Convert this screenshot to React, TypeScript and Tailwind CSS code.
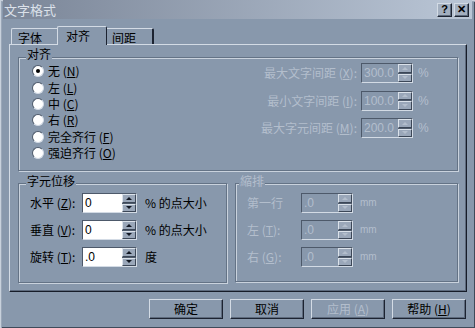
import React from 'react';

const BG = 'bg-[#8898ac]';
const RAISED =
  'border-t border-l border-t-[#d3dbe5] border-l-[#d3dbe5] border-r border-b border-r-[#1c2331] border-b-[#1c2331] shadow-[inset_-1px_-1px_0_#5d6a7d]';
const SUNKEN =
  'border-t border-l border-t-[#4d596a] border-l-[#4d596a] border-r border-b border-r-[#d3dbe5] border-b-[#d3dbe5] shadow-[inset_1px_1px_0_#1c2331]';
const DIS = 'text-[#b3becc]';

function Key({ k }: { k: string }) {
  return (
    <>
      {' '}(<span className="underline underline-offset-1">{k}</span>)
    </>
  );
}

function Radio({ checked, label, k }: { checked?: boolean; label: string; k: string }) {
  return (
    <div className="flex items-center h-[16.4px]">
      <span className="w-[12px] h-[12px] rounded-full bg-white border border-t-[#4d596a] border-l-[#4d596a] border-r-[#d3dbe5] border-b-[#d3dbe5] flex items-center justify-center">
        {checked && <span className="w-[4px] h-[4px] rounded-full bg-black" />}
      </span>
      <span className="ml-[4px]">
        {label}
        <Key k={k} />
      </span>
    </div>
  );
}

function Spin({ disabled }: { disabled?: boolean }) {
  const col = disabled ? '#b3becc' : '#111722';
  return (
    <div className="w-[14px] h-full flex flex-col">
      <div className="flex-1 bg-[#9aa7b9] border-t border-l border-t-[#dbe2ea] border-l-[#dbe2ea] border-r border-b border-r-[#3c4757] border-b-[#3c4757] flex items-center justify-center">
        <span
          className="w-0 h-0 border-x-[3px] border-b-[3px] border-x-transparent"
          style={{ borderBottomColor: col }}
        />
      </div>
      <div className="h-[1px] bg-[#4f5b6c]" />
      <div className="flex-1 bg-[#9aa7b9] border-t border-l border-t-[#dbe2ea] border-l-[#dbe2ea] border-r border-b border-r-[#3c4757] border-b-[#3c4757] flex items-center justify-center">
        <span
          className="w-0 h-0 border-x-[3px] border-t-[3px] border-x-transparent"
          style={{ borderTopColor: col }}
        />
      </div>
    </div>
  );
}

function Field({ value, w, disabled }: { value: string; w: string; disabled?: boolean }) {
  return (
    <div className={`flex h-[20px] ${w} ${SUNKEN}`}>
      <div
        className={`flex-1 flex items-center pl-[2px] ${
          disabled ? `${BG} ${DIS}` : 'bg-white text-black'
        } font-['Liberation_Sans',sans-serif] text-[12px]`}
      >
        {value}
      </div>
      <Spin disabled={disabled} />
    </div>
  );
}

function Group({
  label,
  disabled,
  className,
  labelLeft,
  labelTop,
  children,
}: {
  label: string;
  disabled?: boolean;
  className: string;
  labelLeft: string;
  labelTop: string;
  children: React.ReactNode;
}) {
  return (
    <div
      className={`relative border border-[#647386] shadow-[inset_1px_1px_0_#c9d2dd,1px_1px_0_#c9d2dd] ${className}`}
    >
      <span
        className={`absolute ${labelLeft} ${labelTop} ${BG} px-[1px] leading-[14px] ${
          disabled ? DIS : 'text-black'
        }`}
      >
        {label}
      </span>
      {children}
    </div>
  );
}

function SpaceRow({ label, value }: { label: React.ReactNode; value: string }) {
  return (
    <div className="flex items-center h-[20px]">
      <span className={`${DIS} text-right whitespace-nowrap`}>{label}</span>
      <div className="ml-[4px]">
        <Field value={value} w="w-[52px]" disabled />
      </div>
      <span className={`ml-[5px] w-[12px] ${DIS} font-['Liberation_Sans',sans-serif]`}>%</span>
    </div>
  );
}

function OffsetRow({ label, k, value, unit }: { label: string; k: string; value: string; unit: string }) {
  return (
    <div className="flex items-center h-[20px]">
      <span className="w-[48px] whitespace-nowrap">
        {label}
        <Key k={k} />:
      </span>
      <div className="ml-[4px]">
        <Field value={value} w="w-[55px]" />
      </div>
      <span className="ml-[8px] whitespace-nowrap">{unit}</span>
    </div>
  );
}

function IndentRow({ label, value }: { label: React.ReactNode; value: string }) {
  return (
    <div className="flex items-center h-[20px]">
      <span className={`w-[50px] whitespace-nowrap ${DIS}`}>{label}</span>
      <div className="ml-[4px]">
        <Field value={value} w="w-[52px]" disabled />
      </div>
      <span className={`ml-[7px] ${DIS} text-[10px] font-['Liberation_Sans',sans-serif]`}>mm</span>
    </div>
  );
}

function Button({ children, disabled }: { children: React.ReactNode; disabled?: boolean }) {
  return (
    <div
      className={`w-[74px] h-[20px] flex items-center justify-center ${BG} ${RAISED} ${
        disabled ? DIS : 'text-black'
      }`}
    >
      {children}
    </div>
  );
}

export default function App() {
  return (
    <div
      className={`w-[475px] h-[328px] ${BG} flex flex-col px-[3px] shadow-[inset_1px_1px_0_#c8d1dc,inset_2px_2px_0_#9aa7b8,inset_-1px_-1px_0_#3f4a5a] font-['Noto_Sans_CJK_SC','Liberation_Sans',sans-serif] text-[12px] leading-none text-black overflow-hidden`}
    >
      {/* title bar */}
      <div className="h-[19px] flex items-center justify-between bg-linear-to-r from-[#7b8698] to-[#bac6d6] pl-[1px] pr-[3px]">
        <span className="text-[#dbe1ea] text-[13px]">文字格式</span>
        <div className="flex gap-[2px]">
          <div className={`w-[15px] h-[14px] bg-[#a3afbf] ${RAISED} flex items-center justify-center font-['Liberation_Sans',sans-serif] font-bold text-[11px]`}>
            ?
          </div>
          <div className={`w-[15px] h-[14px] bg-[#a3afbf] ${RAISED} flex items-center justify-center font-['Liberation_Sans',sans-serif] font-bold text-[11px]`}>
            ✕
          </div>
        </div>
      </div>

      {/* tabs */}
      <div className="mt-[7px] ml-[6px] pl-[2px] h-[18px] flex items-end">
        <div className="w-[46px] h-[16px] border-t border-l border-[#d3dbe5] rounded-tl-[2px] pl-[6px] pt-[3px]">
          字体
        </div>
        <div className={`relative z-10 w-[50px] h-[19px] -mb-[1px] ${BG} border-t border-l border-[#d3dbe5] border-r border-r-[#1c2331] rounded-t-[2px] pl-[8px] pt-[3px]`}>
          对齐
        </div>
        <div className="w-[47px] h-[16px] border-t border-[#d3dbe5] border-r-2 border-r-[#1c2331] rounded-tr-[2px] pl-[5px] pt-[3px]">
          间距
        </div>
      </div>

      {/* panel */}
      <div className="ml-[6px] w-[458px] h-[248px] border-t border-l border-[#d3dbe5] border-r border-b border-r-[#161c28] border-b-[#161c28] shadow-[inset_-1px_-1px_0_#5d6a7d] pt-[12px] pl-[8px]">
        <Group label="对齐" className="w-[440px] h-[114px] flex" labelLeft="left-[7px]" labelTop="top-[-11px]">
          <div className="pl-[13px] pt-[5px] flex flex-col">
            <Radio checked label="无" k="N" />
            <Radio label="左" k="L" />
            <Radio label="中" k="C" />
            <Radio label="右" k="R" />
            <Radio label="完全齐行" k="F" />
            <Radio label="强迫齐行" k="O" />
          </div>
          <div className="ml-auto pr-[27px] pt-[5px] flex flex-col items-end gap-[7.5px]">
            <SpaceRow label={<>最大文字间距<Key k="X" />:</>} value="300.0" />
            <SpaceRow label={<>最小文字间距<Key k="I" />:</>} value="100.0" />
            <SpaceRow label={<>最大字元间距<Key k="M" />:</>} value="200.0" />
          </div>
        </Group>

        <div className="mt-[12px] flex gap-[8px]">
          <Group label="字元位移" className="w-[209px] h-[100px]" labelLeft="left-[7px]" labelTop="top-[-10px]">
            <div className="pl-[11px] pt-[9px] flex flex-col gap-[7px]">
              <OffsetRow label="水平" k="Z" value="0" unit="% 的点大小" />
              <OffsetRow label="垂直" k="V" value="0" unit="% 的点大小" />
              <OffsetRow label="旋转" k="T" value=".0" unit="度" />
            </div>
          </Group>
          <Group label="縮排" disabled className="w-[223px] h-[99px]" labelLeft="left-[3px]" labelTop="top-[-10px]">
            <div className="pl-[11px] pt-[9px] flex flex-col gap-[7px]">
              <IndentRow label="第一行" value=".0" />
              <IndentRow label={<>左<Key k="T" />:</>} value=".0" />
              <IndentRow label={<>右<Key k="G" />:</>} value=".0" />
            </div>
          </Group>
        </div>
      </div>

      {/* buttons */}
      <div className="mt-[7px] ml-[6px] w-[458px] pr-[1px] flex justify-end gap-[7px]">
        <Button>确定</Button>
        <Button>取消</Button>
        <Button disabled>
          应用<Key k="A" />
        </Button>
        <Button>
          帮助<Key k="H" />
        </Button>
      </div>
    </div>
  );
}
